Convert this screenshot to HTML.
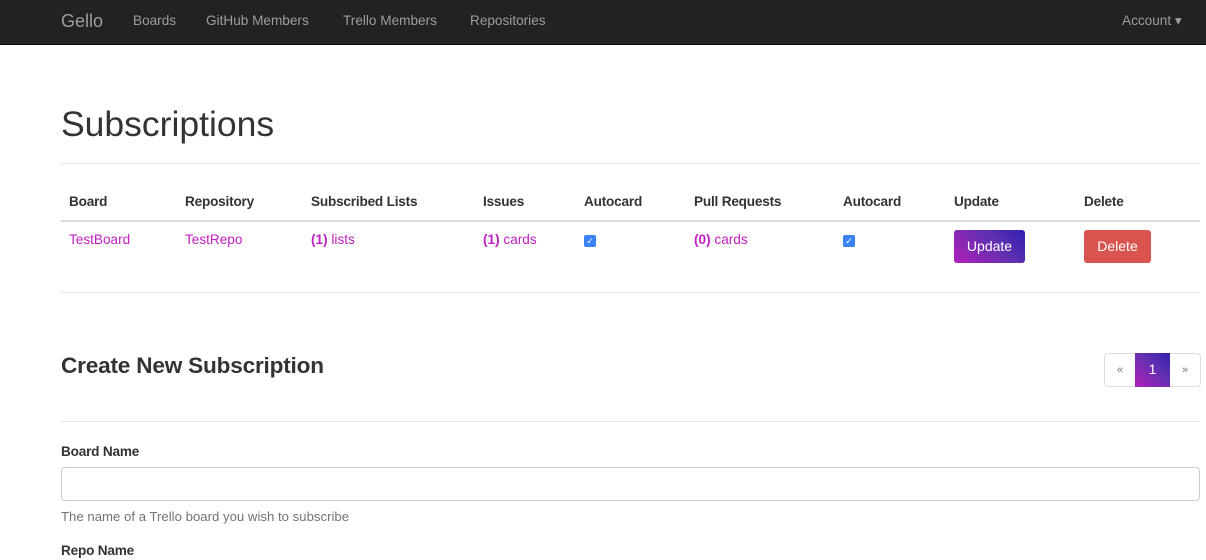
<!DOCTYPE html>
<html><head><style>
*{box-sizing:border-box}
body{margin:0;width:1206px;height:560px;overflow:hidden;background:#fff;font-family:"Liberation Sans",sans-serif;color:#333;font-size:13.6px}
.nav{height:45px;background:#222;border-bottom:1px solid #080808;position:relative;color:#9d9d9d}
.nav span{position:absolute;top:13px;font-size:13.6px}
.brand{font-size:18px!important;top:11px!important}
h1{position:absolute;left:61px;top:104px;margin:0;font-size:35.5px;font-weight:normal;color:#333}
.hr{position:absolute;left:61px;width:1139px;height:1px;background:#e8e8e8}
.t{position:absolute;font-size:13.6px}
.b{font-weight:bold;letter-spacing:-0.2px}
.l{color:#c020c0}
.cb{position:absolute;width:12px;height:12px;background:#3b82f6;border-radius:2px;color:#fff;font-size:9px;text-align:center;line-height:12px}
.btn{position:absolute;height:33px;border-radius:3px;color:#fff;text-align:center;line-height:33px;font-size:14px}
.grad{background:linear-gradient(45deg,#b020b8,#6030b0 60%,#3020b0)}
</style></head><body>
<div class="nav">
<span class="brand" style="left:61px">Gello</span>
<span style="left:133px">Boards</span>
<span style="left:206px">GitHub Members</span>
<span style="left:343px">Trello Members</span>
<span style="left:470px">Repositories</span>
<span style="left:1122px">Account ▾</span>
</div>
<h1>Subscriptions</h1>
<div class="hr" style="top:163px"></div>
<div class="t b" style="left:69px;top:194px">Board</div>
<div class="t b" style="left:185px;top:194px">Repository</div>
<div class="t b" style="left:311px;top:194px">Subscribed Lists</div>
<div class="t b" style="left:483px;top:194px">Issues</div>
<div class="t b" style="left:584px;top:194px">Autocard</div>
<div class="t b" style="left:694px;top:194px">Pull Requests</div>
<div class="t b" style="left:843px;top:194px">Autocard</div>
<div class="t b" style="left:954px;top:194px">Update</div>
<div class="t b" style="left:1084px;top:194px">Delete</div>
<div class="hr" style="top:220px;height:2px;background:#ddd"></div>
<div class="t l" style="left:69px;top:232px">TestBoard</div>
<div class="t l" style="left:185px;top:232px">TestRepo</div>
<div class="t l" style="left:311px;top:232px"><b>(1)</b> lists</div>
<div class="t l" style="left:483px;top:232px"><b>(1)</b> cards</div>
<div class="cb" style="left:584px;top:235px">✓</div>
<div class="t l" style="left:694px;top:232px"><b>(0)</b> cards</div>
<div class="cb" style="left:843px;top:235px">✓</div>
<div class="btn grad" style="left:954px;top:230px;width:71px">Update</div>
<div class="btn" style="left:1084px;top:230px;width:67px;background:#d9534f">Delete</div>
<div class="hr" style="top:292px"></div>
<div class="t b" style="left:61px;top:353px;font-size:22.6px">Create New Subscription</div>
<div style="position:absolute;left:1104px;top:353px;width:97px;height:34px;border:1px solid #ddd;border-radius:4px"></div>
<div class="t" style="left:1117px;top:364px;font-size:11px;color:#777">«</div>
<div class="grad" style="position:absolute;left:1135px;top:353px;width:35px;height:34px;color:#fff;text-align:center;line-height:34px">1</div>
<div class="t" style="left:1182px;top:364px;font-size:11px;color:#777">»</div>
<div class="hr" style="top:421px"></div>
<div class="t b" style="left:61px;top:444px">Board Name</div>
<div style="position:absolute;left:61px;top:467px;width:1139px;height:34px;border:1px solid #ccc;border-radius:4px"></div>
<div class="t" style="left:61px;top:509px;color:#737373;font-size:13.2px">The name of a Trello board you wish to subscribe</div>
<div class="t b" style="left:61px;top:543px">Repo Name</div>
</body></html>
